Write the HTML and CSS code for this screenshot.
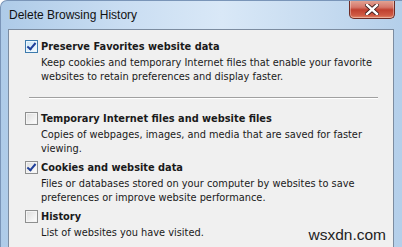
FILE: index.html
```html
<!DOCTYPE html>
<html lang="en">
<head>
    <meta charset="UTF-8">
    <meta name="viewport" content="width=device-width, initial-scale=1.0">
    <title>Delete Browsing History</title>
    <link rel="stylesheet" href="styles.css">
</head>
<body>
    <div class="window">
        <div class="titlebar">
            <span class="title">Delete Browsing History</span>
            <button class="close" type="button" aria-label="Close">
                <svg width="14" height="11" viewBox="0 0 14 11">
                    <path d="M2 1 L12 10 M12 1 L2 10" stroke="#3a1a1a" stroke-width="4.2" stroke-linecap="square"/>
                    <path d="M2 1 L12 10 M12 1 L2 10" stroke="#ffffff" stroke-width="2.4" stroke-linecap="square"/>
                </svg>
            </button>
        </div>
        <div class="client">
            <div class="option">
                <span class="check checked hover"></span>
                <div class="text">
                    <div class="label">Preserve Favorites website data</div>
                    <div class="desc">Keep cookies and temporary Internet files that enable your favorite websites to retain preferences and display faster.</div>
                </div>
            </div>
            <hr class="separator">
            <div class="group">
                <div class="option">
                    <span class="check"></span>
                    <div class="text">
                        <div class="label">Temporary Internet files and website files</div>
                        <div class="desc">Copies of webpages, images, and media that are saved for faster viewing.</div>
                    </div>
                </div>
                <div class="option">
                    <span class="check checked"></span>
                    <div class="text">
                        <div class="label">Cookies and website data</div>
                        <div class="desc">Files or databases stored on your computer by websites to save preferences or improve website performance.</div>
                    </div>
                </div>
                <div class="option">
                    <span class="check"></span>
                    <div class="text">
                        <div class="label">History</div>
                        <div class="desc">List of websites you have visited.</div>
                    </div>
                </div>
            </div>
            <div class="watermark">wsxdn.com</div>
        </div>
    </div>
</body>
</html>
```

FILE: styles.css
```css
body {
    margin: 0;
    padding: 0;
    font-family: "Liberation Sans", Arial, sans-serif;
    background: #ffffff;
}
.window {
    width: 402px;
    height: 247px;
    box-sizing: border-box;
    padding: 0 8px 0 7px;
    background: linear-gradient(to right, #aecbe8 0%, #c9ddf2 30%, #d9e8f7 55%, #c6dbf0 80%, #b4cfea 100%);
    border-top: 1px solid #7a95b8;
    border-left: 1px solid #7a95b8;
    border-top-left-radius: 7px;
    display: flex;
    flex-direction: column;
    overflow: hidden;
}
.titlebar {
    height: 28px;
    display: flex;
    align-items: flex-start;
    justify-content: space-between;
    flex-shrink: 0;
}
.title {
    font-size: 12px;
    color: #111;
    margin-top: 7px;
    margin-left: 1px;
}
.close {
    width: 46px;
    height: 19px;
    margin-top: -1px;
    margin-right: -1px;
    padding: 0;
    border: 1px solid #6d2b25;
    border-top: none;
    border-radius: 0 0 5px 5px;
    background: linear-gradient(to bottom, #e4a898 0%, #d5776a 40%, #c0402f 55%, #cf5a44 85%, #e48a6a 100%);
    box-shadow: inset 0 0 0 1px rgba(255, 255, 255, 0.35);
    display: flex;
    align-items: center;
    justify-content: center;
}
.client {
    position: relative;
    flex: 1;
    background: #f0f0f0;
    border: 1px solid #7c8ca0;
    border-bottom: none;
    padding: 10px 16px 0 16px;
    font-family: "DejaVu Sans", Verdana, sans-serif;
    font-size: 9.8px;
    color: #1a1a1a;
}
.option {
    display: flex;
    align-items: flex-start;
}
.check {
    width: 11px;
    height: 11px;
    flex-shrink: 0;
    margin-right: 3px;
    border: 1px solid #8e8f8f;
    background: linear-gradient(135deg, #dcdcdc 0%, #f4f4f4 70%, #ffffff 100%);
    box-shadow: inset 0 0 0 1px #f4f4f4;
    position: relative;
}
.check.hover {
    border-color: #3d7bad;
    background: linear-gradient(135deg, #c8e4f6 0%, #e8f4fc 70%, #ffffff 100%);
    box-shadow: inset 0 0 0 1px #eef7fd;
}
.check.checked::after {
    content: "";
    position: absolute;
    left: 3px;
    top: 0px;
    width: 3px;
    height: 7px;
    border: solid #1f3f9a;
    border-width: 0 2px 2px 0;
    transform: rotate(40deg);
}
.label {
    font-weight: bold;
    line-height: 14px;
}
.desc {
    margin-top: 2px;
    line-height: 14px;
}
.separator {
    border: none;
    border-top: 1px solid #a0a0a0;
    border-bottom: 1px solid #ffffff;
    margin: 13px 0 13px 4px;
    width: 349px;
}
.group {
    display: flex;
    flex-direction: column;
    gap: 5px;
}
.watermark {
    position: absolute;
    right: 5px;
    bottom: 3px;
    font-family: "Liberation Sans", Arial, sans-serif;
    font-size: 15.5px;
    color: #222;
    background: #f0f0f0;
    padding: 0 2px;
}
```
